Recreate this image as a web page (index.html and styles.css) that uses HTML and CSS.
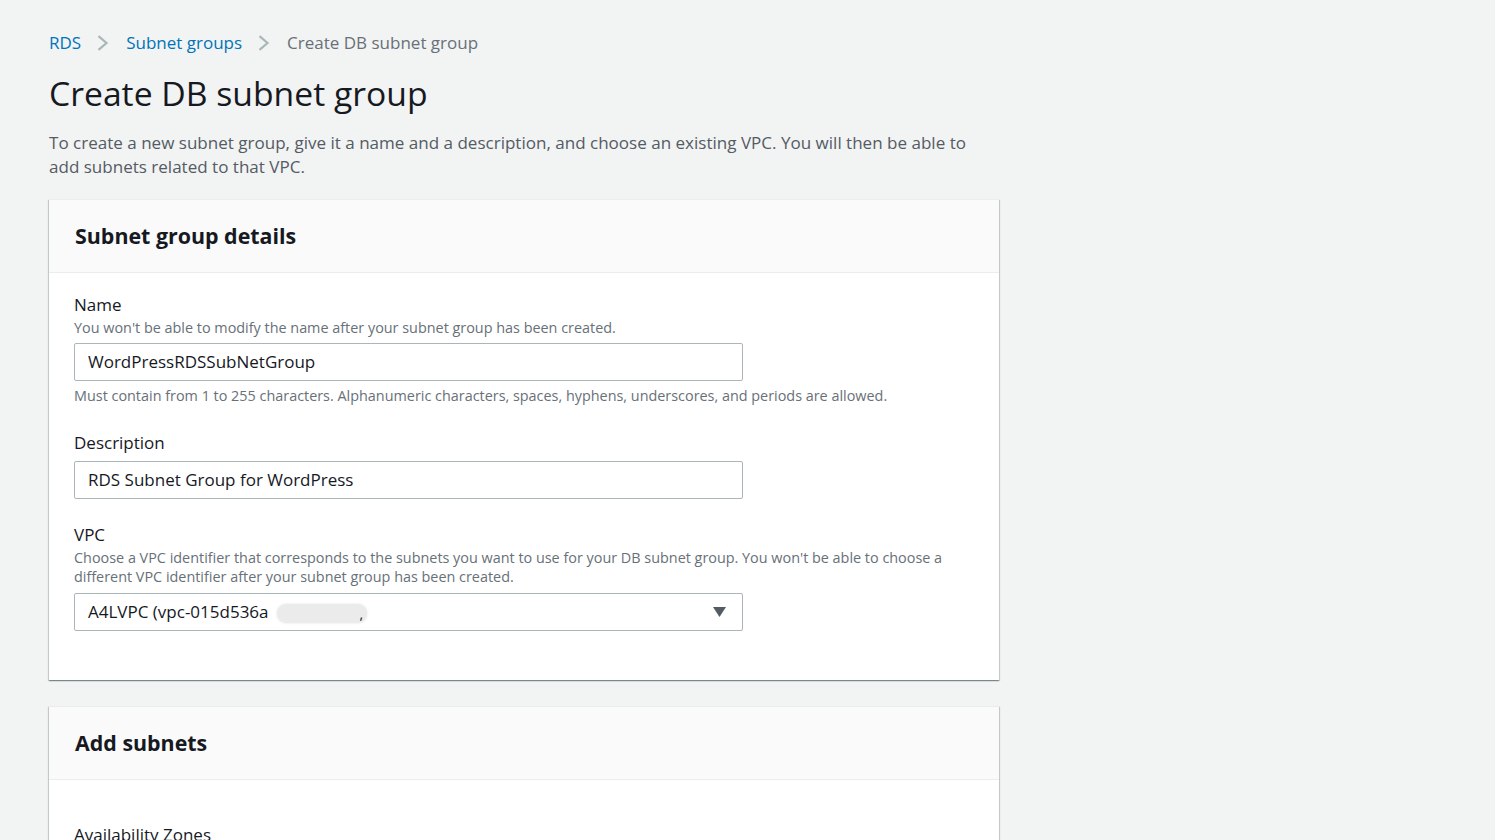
FILE: index.html
```
<!DOCTYPE html>
<html>
<head>
<meta charset="utf-8">
<title>Create DB subnet group</title>
<link rel="stylesheet" href="styles.css">
</head>
<body>
<main class="page">
  <nav class="breadcrumbs">
    <a class="crumb-link" href="#">RDS</a>
    <svg class="chev" width="12" height="16" viewBox="0 0 12 16"><polyline points="1.5,1.2 9.5,8 1.5,14.8" fill="none" stroke="#aab7b8" stroke-width="2.2"/></svg>
    <a class="crumb-link" href="#">Subnet groups</a>
    <svg class="chev" width="12" height="16" viewBox="0 0 12 16"><polyline points="1.5,1.2 9.5,8 1.5,14.8" fill="none" stroke="#aab7b8" stroke-width="2.2"/></svg>
    <span class="crumb-current">Create DB subnet group</span>
  </nav>

  <h1 class="title">Create DB subnet group</h1>
  <p class="intro">To create a new subnet group, give it a name and a description, and choose an existing VPC. You will then be able to add subnets related to that VPC.</p>

  <section class="card">
    <div class="card-header"><h2 class="card-title">Subnet group details</h2></div>
    <div class="card-body">
      <div class="field field-name">
        <label class="label">Name</label>
        <div class="hint hint-top">You won't be able to modify the name after your subnet group has been created.</div>
        <div class="input">WordPressRDSSubNetGroup</div>
        <div class="hint hint-bottom">Must contain from 1 to 255 characters. Alphanumeric characters, spaces, hyphens, underscores, and periods are allowed.</div>
      </div>
      <div class="field field-desc">
        <label class="label">Description</label>
        <div class="input input-desc">RDS Subnet Group for WordPress</div>
      </div>
      <div class="field field-vpc">
        <label class="label">VPC</label>
        <div class="hint hint-vpc">Choose a VPC identifier that corresponds to the subnets you want to use for your DB subnet group. You won't be able to choose a different VPC identifier after your subnet group has been created.</div>
        <div class="input select">
          <span class="select-value">A4LVPC (vpc-015d536a<span class="redact"></span><span class="paren">,</span></span>
          <svg class="caret" width="13" height="10" viewBox="0 0 13 10"><polygon points="0,0 13,0 6.5,10" fill="#545b64"/></svg>
        </div>
      </div>
    </div>
  </section>

  <section class="card card-second">
    <div class="card-header"><h2 class="card-title">Add subnets</h2></div>
    <div class="card-body card-body-second">
      <label class="label">Availability Zones</label>
    </div>
  </section>
</main>
</body>
</html>
```
FILE: styles.css
```
html, body {
  margin: 0;
  padding: 0;
  background: #f2f3f3;
  overflow: hidden;
}
body {
  font-family: "Open Sans", "Noto Sans", sans-serif;
  color: #16191f;
  font-size: 17px;
}
.page {
  width: 950px;
  margin-left: 49px;
  padding-top: 31px;
}
.breadcrumbs {
  display: flex;
  align-items: center;
  height: 24px;
  line-height: 24px;
}
.crumb-link {
  color: #0073bb;
  text-decoration: none;
}
.chev {
  margin: 0 17px 0 16px;
  display: block;
}
.crumb-current {
  color: #687078;
}
.title {
  margin: 18px 0 0;
  font-size: 33.7px;
  font-weight: 400;
  line-height: 40px;
  color: #16191f;
}
.intro {
  margin: 18px 0 0;
  line-height: 24px;
  color: #545b64;
  max-width: 930px;
  font-size: 17.05px;
}
.card {
  margin-top: 20px;
  background: #fff;
  border-top: 1px solid #eaeded;
  box-shadow: 0 1px 1px 0 rgba(0, 28, 36, .3), 1px 1px 1px 0 rgba(0, 28, 36, .15), -1px 1px 1px 0 rgba(0, 28, 36, .15);
}
.card-second {
  margin-top: 26px;
}
.card-header {
  background: #fafafa;
  border-bottom: 1px solid #eaeded;
  padding: 21px 26px 21px;
}
.card-title {
  margin: 0;
  font-size: 21.4px;
  font-weight: 700;
  line-height: 30px;
  color: #16191f;
}
.card-body {
  padding: 20px 25px 49px;
}
.card-body-second {
  padding-top: 43px;
  padding-bottom: 60px;
}
.label {
  display: block;
  line-height: 24px;
  color: #16191f;
}
.hint {
  font-size: 14.4px;
  line-height: 19px;
  color: #687078;
}
.hint-top {
  margin-top: 1px;
}
.hint-bottom {
  margin-top: 5px;
}
.hint-vpc {
  margin-top: 1px;
}
.input {
  box-sizing: border-box;
  width: 669px;
  height: 38px;
  margin-top: 6px;
  border: 1px solid #aab7b8;
  border-radius: 2px;
  padding: 0 14px 0 13px;
  line-height: 36px;
  font-size: 17px;
  color: #16191f;
  background: #fff;
}
.input-desc {
  margin-top: 6px;
}
.field-desc {
  margin-top: 26px;
}
.field-vpc {
  margin-top: 24px;
}
.select {
  margin-top: 7px;
  display: flex;
  align-items: center;
  justify-content: space-between;
  padding-right: 16px;
}
.select-value {
  display: flex;
  align-items: center;
}
.redact {
  display: inline-block;
  width: 90px;
  height: 19px;
  margin-left: 8px;
  margin-top: 2px;
  background: #ebebeb;
  border-radius: 9px;
  box-shadow: 0 0 2px 1px #f3f3f3;
}
.paren {
  margin-left: -7px;
  margin-top: 4px;
  color: #16191f;
  font-size: 14px;
}
.caret {
  display: block;
}
```
